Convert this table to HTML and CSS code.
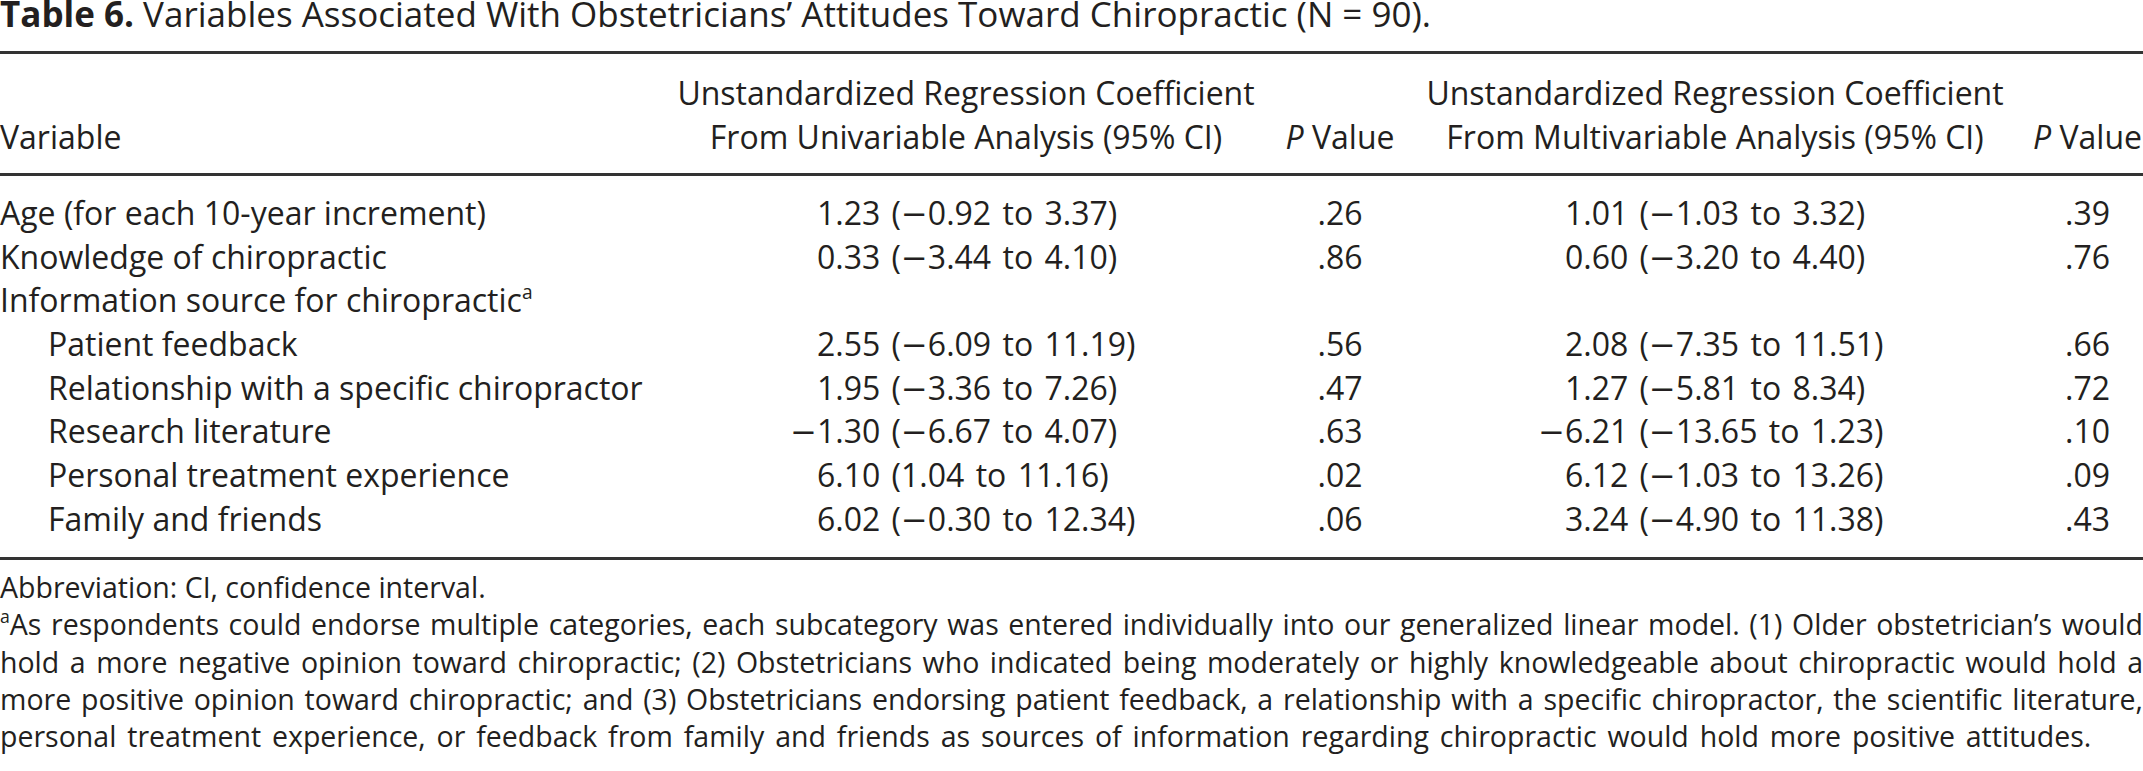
FILE: index.html
```html
<!DOCTYPE html>
<html lang="en">
<head>
<meta charset="utf-8">
<title>Table 6</title>
<link rel="stylesheet" href="styles.css">
</head>
<body>
<div class="page">
  <p class="caption"><b>Table 6.</b> Variables Associated With Obstetricians’ Attitudes Toward Chiropractic (N = 90).</p>
  <table class="data">
    <colgroup>
      <col class="c-var">
      <col class="c-est">
      <col class="c-p">
      <col class="c-est2">
      <col class="c-p2">
    </colgroup>
    <thead>
      <tr>
        <th class="h-var">Variable</th>
        <th class="h-est">Unstandardized Regression Coefficient<br>From Univariable Analysis (95% CI)</th>
        <th class="h-p"><i>P</i> Value</th>
        <th class="h-est">Unstandardized Regression Coefficient<br>From Multivariable Analysis (95% CI)</th>
        <th class="h-p h-last"><i>P</i> Value</th>
      </tr>
    </thead>
    <tbody>
      <tr class="first">
        <td>Age (for each 10-year increment)</td>
        <td class="est">1.23 (<span class="m">−</span>0.92 to 3.37)</td>
        <td class="pv">.26</td>
        <td class="est">1.01 (<span class="m">−</span>1.03 to 3.32)</td>
        <td class="pv pv-last">.39</td>
      </tr>
      <tr>
        <td>Knowledge of chiropractic</td>
        <td class="est">0.33 (<span class="m">−</span>3.44 to 4.10)</td>
        <td class="pv">.86</td>
        <td class="est">0.60 (<span class="m">−</span>3.20 to 4.40)</td>
        <td class="pv pv-last">.76</td>
      </tr>
      <tr>
        <td>Information source for chiropractic<sup>a</sup></td>
        <td class="est"></td>
        <td class="pv"></td>
        <td class="est"></td>
        <td class="pv pv-last"></td>
      </tr>
      <tr>
        <td class="sub">Patient feedback</td>
        <td class="est">2.55 (<span class="m">−</span>6.09 to 11.19)</td>
        <td class="pv">.56</td>
        <td class="est">2.08 (<span class="m">−</span>7.35 to 11.51)</td>
        <td class="pv pv-last">.66</td>
      </tr>
      <tr>
        <td class="sub">Relationship with a specific chiropractor</td>
        <td class="est">1.95 (<span class="m">−</span>3.36 to 7.26)</td>
        <td class="pv">.47</td>
        <td class="est">1.27 (<span class="m">−</span>5.81 to 8.34)</td>
        <td class="pv pv-last">.72</td>
      </tr>
      <tr>
        <td class="sub">Research literature</td>
        <td class="est neg"><span class="m">−</span>1.30 (<span class="m">−</span>6.67 to 4.07)</td>
        <td class="pv">.63</td>
        <td class="est neg"><span class="m">−</span>6.21 (<span class="m">−</span>13.65 to 1.23)</td>
        <td class="pv pv-last">.10</td>
      </tr>
      <tr>
        <td class="sub">Personal treatment experience</td>
        <td class="est">6.10 (1.04 to 11.16)</td>
        <td class="pv">.02</td>
        <td class="est">6.12 (<span class="m">−</span>1.03 to 13.26)</td>
        <td class="pv pv-last">.09</td>
      </tr>
      <tr class="last">
        <td class="sub">Family and friends</td>
        <td class="est">6.02 (<span class="m">−</span>0.30 to 12.34)</td>
        <td class="pv">.06</td>
        <td class="est">3.24 (<span class="m">−</span>4.90 to 11.38)</td>
        <td class="pv pv-last">.43</td>
      </tr>
    </tbody>
  </table>
  <div class="notes">
    <p class="note">Abbreviation: CI, confidence interval.</p>
    <p class="note note-a">
      <span class="line"><sup>a</sup>As respondents could endorse multiple categories, each subcategory was entered individually into our generalized linear model. (1) Older obstetrician’s would</span>
      <span class="line">hold a more negative opinion toward chiropractic; (2) Obstetricians who indicated being moderately or highly knowledgeable about chiropractic would hold a</span>
      <span class="line">more positive opinion toward chiropractic; and (3) Obstetricians endorsing patient feedback, a relationship with a specific chiropractor, the scientific literature,</span>
      <span class="line line-end">personal treatment experience, or feedback from family and friends as sources of information regarding chiropractic would hold more positive attitudes.</span>
    </p>
  </div>
</div>
</body>
</html>
```

FILE: styles.css
```css
html, body {
  margin: 0;
  padding: 0;
  background: #ffffff;
}

.page {
  width: 2143px;
  font-family: "Open Sans", "Liberation Sans", sans-serif;
  color: #231f20;
}

.caption {
  margin: 0 0 24px 0;
  font-size: 35px;
  line-height: 27px;
  white-space: nowrap;
}

.caption b {
  font-weight: 700;
}

.data {
  width: 2143px;
  table-layout: fixed;
  border-collapse: collapse;
  border-top: 3px solid #333;
  border-bottom: 3px solid #333;
  font-size: 32px;
  line-height: 43.7px;
}

.c-var { width: 660px; }
.c-est { width: 612px; }
.c-p { width: 136px; }
.c-est2 { width: 614px; }
.c-p2 { width: 121px; }

.data thead tr {
  border-bottom: 3px solid #333;
}

.data th {
  font-weight: 400;
  padding: 17px 0 14.5px 0;
  vertical-align: bottom;
  white-space: nowrap;
}

.data th.h-var {
  text-align: left;
}

.data th.h-est,
.data th.h-p {
  text-align: center;
}

.data th.h-last {
  padding-left: 10px;
}

.data td {
  padding: 0;
  white-space: nowrap;
  vertical-align: baseline;
}

.data tr.first td {
  padding-top: 15px;
}

.data tr.last td {
  padding-bottom: 16.5px;
}

.data td.sub {
  padding-left: 48px;
}

.data td.est {
  padding-left: 157px;
  text-align: left;
  word-spacing: 3px;
}

.data td.neg {
  text-indent: -0.838em;
}

.m {
  font-family: "DejaVu Sans", sans-serif;
  line-height: 1;
  word-spacing: 0;
}

.data td.pv {
  text-align: center;
}

.data td.pv-last {
  padding-left: 10px;
}

sup {
  font-size: 0.6em;
  line-height: 0;
  vertical-align: 0.7em;
}

.notes {
  margin-top: 9px;
  font-size: 28.5px;
  line-height: 37.25px;
}

.note {
  margin: 0;
}

.note-a .line {
  display: block;
  white-space: nowrap;
  text-align: justify;
  text-align-last: justify;
}

.note-a .line-end {
  text-align-last: left;
  word-spacing: 3.5px;
}

.note-a sup {
  font-size: 0.62em;
}
```
